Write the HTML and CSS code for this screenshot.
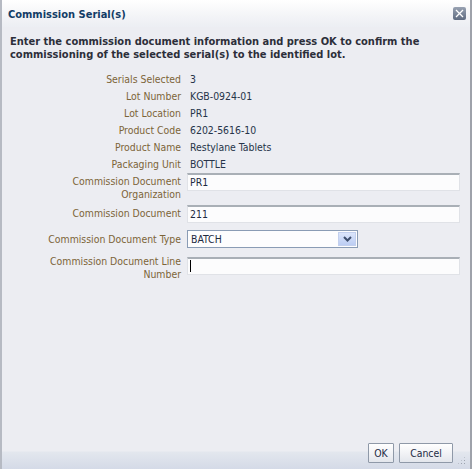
FILE: index.html
```html
<!DOCTYPE html>
<html>
<head>
<meta charset="utf-8">
<link rel="stylesheet" href="styles.css">
</head>
<body>
<div class="dialog">
  <div class="titlebar">
    <span class="title">Commission Serial(s)</span>
    <span class="close" title="Close">
      <svg width="9" height="9" viewBox="0 0 9 9"><path d="M1 1 L8 8 M8 1 L1 8" stroke="#fff" stroke-width="1.3" fill="none"/></svg>
    </span>
  </div>
  <div class="content">
    <p class="intro">Enter the commission document information and press OK to confirm the commissioning of the selected serial(s) to the identified lot.</p>
    <div class="form">
      <div class="row static"><div class="label">Serials Selected</div><div class="value">3</div></div>
      <div class="row static"><div class="label">Lot Number</div><div class="value">KGB-0924-01</div></div>
      <div class="row static"><div class="label">Lot Location</div><div class="value">PR1</div></div>
      <div class="row static"><div class="label">Product Code</div><div class="value">6202-5616-10</div></div>
      <div class="row static"><div class="label">Product Name</div><div class="value">Restylane Tablets</div></div>
      <div class="row static"><div class="label">Packaging Unit</div><div class="value">BOTTLE</div></div>
      <div class="row r-org"><div class="label two">Commission Document Organization</div><div class="input">PR1</div></div>
      <div class="row r-doc"><div class="label">Commission Document</div><div class="input">211</div></div>
      <div class="row r-type"><div class="label">Commission Document Type</div>
        <div class="select"><span>BATCH</span><span class="drop"><svg width="9" height="6" viewBox="0 0 9 6"><path d="M1 1 L4.5 4.5 L8 1" stroke="#3e4f6e" stroke-width="2" fill="none"/></svg></span></div>
      </div>
      <div class="row r-line"><div class="label two">Commission Document Line Number</div><div class="input"><span class="caret"></span></div></div>
    </div>
  </div>
  <div class="footer">
    <button class="btn ok">OK</button>
    <button class="btn cancel">Cancel</button>
    <span class="grip"></span>
  </div>
</div>
</body>
</html>
```
FILE: styles.css
```css
html, body {
  margin: 0;
  padding: 0;
}
body {
  width: 472px;
  height: 469px;
  font-family: "DejaVu Sans Condensed", "DejaVu Sans", sans-serif;
  font-size: 10.4px;
  background: #ecedf2;
  overflow: hidden;
}
.dialog {
  position: relative;
  box-sizing: border-box;
  width: 472px;
  height: 469px;
  display: flex;
  flex-direction: column;
  background: #ecedf2;
  border-left: 2px solid #b6bac3;
  border-right: 2px solid #9ea2aa;
}
.titlebar {
  height: 27px;
  flex: none;
  display: flex;
  align-items: center;
  justify-content: space-between;
  padding: 0 4px 0 6px;
  background: linear-gradient(#ffffff, #f3f4f7 60%, #eceef3);
}
.title {
  font-weight: bold;
  font-size: 11px;
  color: #123c66;
  margin-top: 2px;
}
.close {
  width: 13px;
  height: 13px;
  border-radius: 2px;
  background: linear-gradient(#98a2b2, #5f6b80);
  display: flex;
  align-items: center;
  justify-content: center;
  margin-bottom: 1px;
}
.content {
  flex: 1;
  padding: 8px 0 0 8px;
}
.intro {
  margin: 0;
  font-weight: bold;
  font-size: 11px;
  line-height: 13px;
  color: #2c2f3a;
  width: 445px;
}
.form {
  margin-top: 10px;
}
.row {
  display: flex;
  align-items: flex-start;
}
.label {
  box-sizing: border-box;
  width: 171px;
  padding-left: 34px;
  text-align: right;
  color: #7c6438;
  flex: none;
}
.static {
  line-height: 17px;
}
.static .value {
  margin-left: 9px;
  color: #263449;
}
.label.two {
  line-height: 13px;
}
.input, .select {
  margin-left: 6px;
  box-sizing: border-box;
  height: 18px;
  color: #1e2a3f;
  line-height: 16px;
}
.input {
  width: 273px;
  background: #fcfcfd;
  border: 1px solid #e0e2e7;
  border-top: 2px solid #a9afb6;
  padding-left: 2px;
  line-height: 15px;
}
.r-org { margin-top: 0; }
.r-org .label { padding-top: 2px; }
.r-doc { margin-top: 4px; }
.r-doc .label { line-height: 17px; }
.r-type { margin-top: 7px; }
.r-type .label { line-height: 19px; }
.r-line { margin-top: 7px; }
.r-line .label { margin-top: -1px; }
.r-line .input { margin-top: 1px; }
.select {
  width: 171px;
  background: #fdfdfe;
  border: 1px solid #8a9cb5;
  display: flex;
  align-items: center;
  justify-content: space-between;
  padding: 0 1px 0 3px;
}
.drop {
  width: 18px;
  height: 14px;
  background: linear-gradient(#dbe5fb, #bccdf3);
  border: 1px solid #c3d0ee;
  box-sizing: border-box;
  display: flex;
  align-items: center;
  justify-content: center;
}
.caret {
  display: inline-block;
  width: 1px;
  height: 12px;
  background: #000;
  margin-top: 1px;
  vertical-align: top;
}
.footer {
  flex: none;
  height: 30px;
  position: relative;
  display: flex;
  justify-content: flex-end;
  align-items: flex-start;
  gap: 5px;
  padding-right: 17px;
  background: linear-gradient(#ecedf2 0, #ecedf2 12px, #e3e7ee 13px, #d4dae7 30px);
}
.btn {
  font-family: inherit;
  font-size: 10.4px;
  height: 20px;
  margin: 4px 0 0;
  padding: 0;
  border: 1px solid #8f99a8;
  border-radius: 1px;
  background: linear-gradient(#ffffff, #f2f3f6 50%, #e3e6ec);
  color: #1d2b45;
}
.ok { width: 26px; }
.cancel { width: 54px; }
.grip {
  position: absolute;
  right: 4px;
  bottom: 4px;
  width: 9px;
  height: 9px;
  background-image: radial-gradient(#9da3ae 0.8px, transparent 1px);
  background-size: 3px 3px;
  clip-path: polygon(100% 0, 100% 100%, 0 100%);
}
```
